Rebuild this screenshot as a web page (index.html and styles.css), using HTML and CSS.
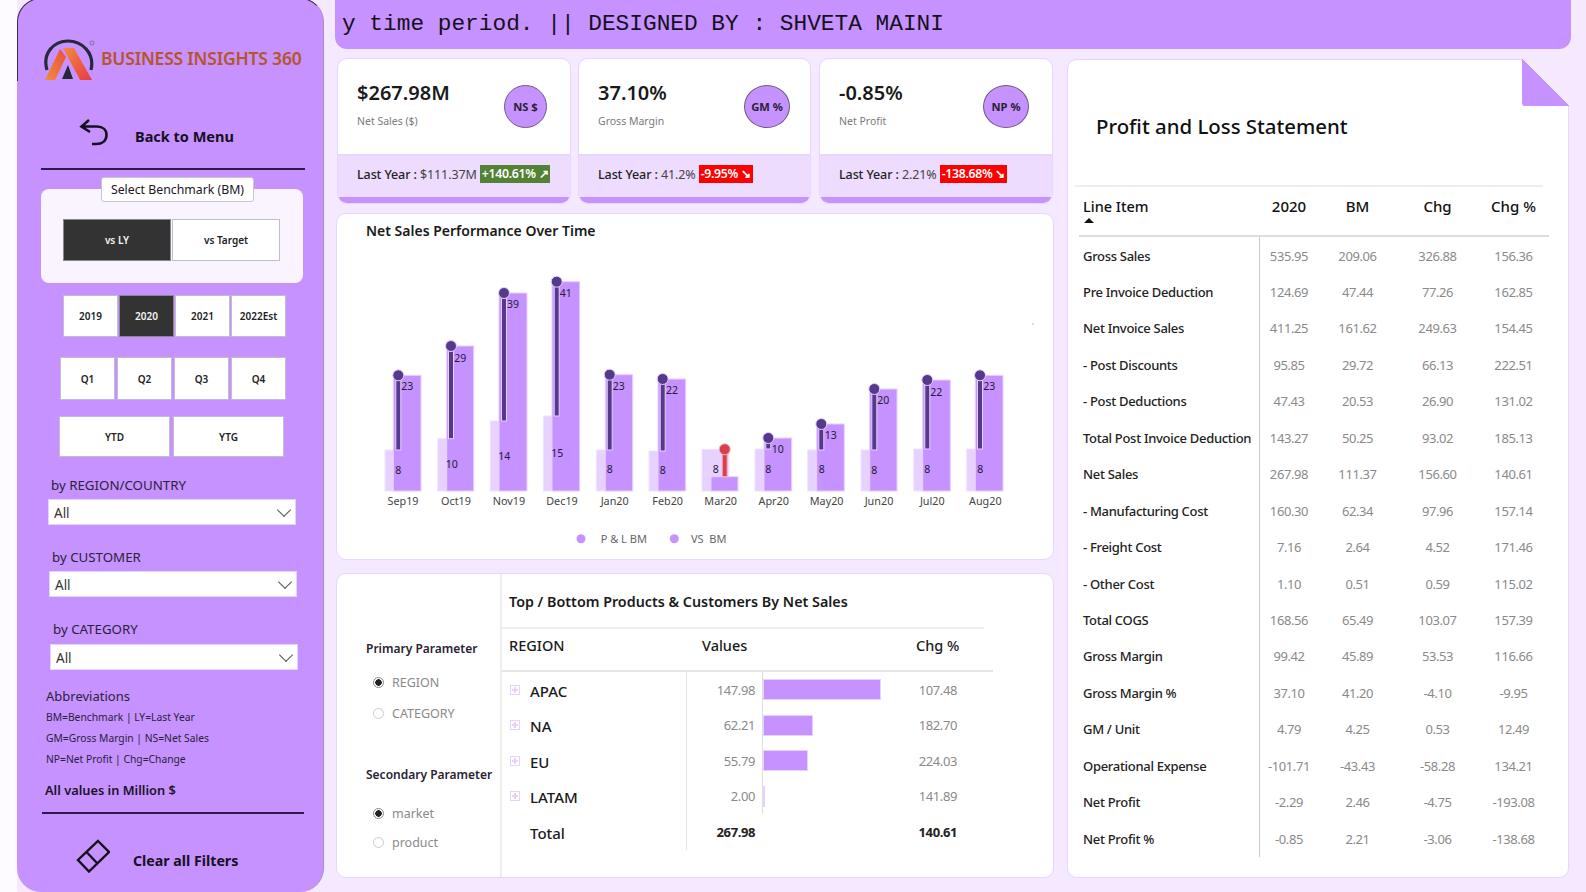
FILE: index.html
```html
<!DOCTYPE html>
<html lang="en">
<head>
  <meta charset="UTF-8" />
  <title>Business Insights 360 - Finance View</title>
  <link rel="stylesheet" href="styles.css">
</head>
<body>
<div class="page">

  <!-- left filter pane -->
  <aside class="sidebar">
    <div class="brand">
      <svg class="logo" width="52" height="44" viewBox="43 37 52 44">
        <defs>
          <linearGradient id="legLeft" x1="0" y1="1" x2="1" y2="0">
            <stop offset="0" stop-color="#f58a3c"/><stop offset="1" stop-color="#e8503a"/>
          </linearGradient>
          <linearGradient id="legRight" x1="0" y1="0" x2="1" y2="1">
            <stop offset="0" stop-color="#f58a3c"/><stop offset="1" stop-color="#e63a46"/>
          </linearGradient>
        </defs>
        <path d="M47 69 C42 52 54 40 68 40 C82 40 95 52 91 69" fill="none" stroke="#28283a" stroke-width="3.200"/>
        <polygon points="45,79 60,48 66,56 55,79" fill="url(#legLeft)"/>
        <polygon points="63,47 74,47 92,79 80,79" fill="url(#legRight)"/>
        <polygon points="62,78 68,64 73,78" fill="#28283a"/>
        <circle cx="92" cy="42" r="2" fill="none" stroke="#666" stroke-width=".7"/>
      </svg>
      <span class="brand-name">BUSINESS INSIGHTS 360</span>
    </div>

    <div class="side-action back">
      <svg width="30" height="28" viewBox="79 117 30 28" fill="none" stroke="#15101e" stroke-width="2.600">
        <path d="M89 119 L81.500 125.500 L90 131 M81.500 125.500 H97 C103 125.500 106.500 129 106.500 134 C106.500 140 102 143 96 143 H92"/>
      </svg>
      <span>Back to Menu</span>
    </div>

    <div class="side-rule"></div>

    <div class="bench">
      <div class="bench-title">Select Benchmark (BM)</div>
      <div class="btn-row">
        <div class="slicer on w108">vs LY</div>
        <div class="slicer w108">vs Target</div>
      </div>
    </div>

    <div class="btn-row years">
      <div class="slicer">2019</div>
      <div class="slicer on">2020</div>
      <div class="slicer">2021</div>
      <div class="slicer">2022Est</div>
    </div>
    <div class="btn-row quarters">
      <div class="slicer">Q1</div>
      <div class="slicer">Q2</div>
      <div class="slicer">Q3</div>
      <div class="slicer">Q4</div>
    </div>
    <div class="btn-row ytd">
      <div class="slicer">YTD</div>
      <div class="slicer">YTG</div>
    </div>

    <div class="filter f-region">
      <div class="filter-label">by REGION/COUNTRY</div>
      <div class="dropdown"><span>All</span><i class="chev"></i></div>
    </div>
    <div class="filter f-customer">
      <div class="filter-label">by CUSTOMER</div>
      <div class="dropdown"><span>All</span><i class="chev"></i></div>
    </div>
    <div class="filter f-category">
      <div class="filter-label">by CATEGORY</div>
      <div class="dropdown"><span>All</span><i class="chev"></i></div>
    </div>

    <div class="abbr">
      <div class="abbr-head">Abbreviations</div>
      <div>BM=Benchmark | LY=Last Year</div>
      <div>GM=Gross Margin | NS=Net Sales</div>
      <div>NP=Net Profit | Chg=Change</div>
    </div>
    <div class="all-values">All values in Million $</div>
    <div class="side-rule low"></div>

    <div class="side-action clear">
      <svg width="34" height="34" viewBox="76 839 34 34" fill="none" stroke="#15101e" stroke-width="2.400">
        <path d="M98 841 L109 852 L89 871.500 L78 860 Z M86.500 852 L97.500 863.500"/>
      </svg>
      <span>Clear all Filters</span>
    </div>
  </aside>

  <main class="main">
    <div class="ticker">y time period. || DESIGNED BY : SHVETA MAINI</div>

    <div class="content">
      <div class="left-col">

        <div class="kpis">
          <div class="kpi w234 kpi-ns">
            <div class="kpi-top">
              <div>
                <div class="kpi-value">$267.98M</div>
                <div class="kpi-label">Net Sales ($)</div>
              </div>
              <div class="kpi-circle">NS $</div>
            </div>
            <div class="kpi-foot">
              <span><em>Last Year :</em> $111.37M</span><span class="delta up">+140.61% &#8599;</span>
            </div>
          </div>
          <div class="kpi w233 kpi-gm">
            <div class="kpi-top">
              <div>
                <div class="kpi-value">37.10%</div>
                <div class="kpi-label">Gross Margin</div>
              </div>
              <div class="kpi-circle">GM %</div>
            </div>
            <div class="kpi-foot">
              <span><em>Last Year :</em> 41.2%</span><span class="delta down">-9.95% &#8600;</span>
            </div>
          </div>
          <div class="kpi w234 kpi-np">
            <div class="kpi-top">
              <div>
                <div class="kpi-value">-0.85%</div>
                <div class="kpi-label">Net Profit</div>
              </div>
              <div class="kpi-circle">NP %</div>
            </div>
            <div class="kpi-foot">
              <span><em>Last Year :</em> 2.21%</span><span class="delta down">-138.68% &#8600;</span>
            </div>
          </div>
        </div>

        <section class="panel chart-card">
          <h3 class="chart-title">Net Sales Performance Over Time</h3>
          <svg class="chart" width="715" height="316" viewBox="337 243 715 316">
            <!-- benchmark bars -->
            <g class="bar-bm">
              <rect x="385" y="450" width="27" height="41"/>
              <rect x="437.700" y="438.700" width="27" height="52.300"/>
              <rect x="490.300" y="421" width="27" height="70"/>
              <rect x="543.300" y="416" width="27" height="75"/>
              <rect x="596.300" y="450" width="27" height="41"/>
              <rect x="649" y="451" width="27" height="40"/>
              <rect x="702" y="449.300" width="27" height="41.700"/>
              <rect x="755" y="449" width="27" height="42"/>
              <rect x="807.700" y="450" width="27" height="41"/>
              <rect x="861" y="450" width="27" height="41"/>
              <rect x="913.700" y="449" width="27" height="42"/>
              <rect x="966.700" y="449" width="27" height="42"/>
            </g>
            <!-- actuals -->
            <g class="bar-vs">
              <rect x="393.300" y="375.300" width="27.700" height="115.700"/>
              <rect x="446.700" y="346" width="27" height="145"/>
              <rect x="499" y="293" width="28" height="198"/>
              <rect x="552" y="281.700" width="27.700" height="209.300"/>
              <rect x="605.300" y="374.700" width="27.400" height="116.300"/>
              <rect x="658" y="379" width="27.700" height="112"/>
              <rect x="711" y="476.700" width="27" height="14.300"/>
              <rect x="764" y="438" width="27.700" height="53"/>
              <rect x="816.700" y="424" width="27.600" height="67"/>
              <rect x="869.700" y="389" width="27.300" height="102"/>
              <rect x="922.700" y="380" width="27.600" height="111"/>
              <rect x="975.300" y="375.300" width="27.700" height="115.700"/>
            </g>
            <!-- variance stems -->
            <g class="stem">
              <rect x="395.800" y="378" width="5" height="72"/>
              <rect x="448.500" y="349" width="5" height="89.700"/>
              <rect x="501.500" y="296" width="5" height="125"/>
              <rect x="554.200" y="284" width="5" height="132"/>
              <rect x="607.200" y="378" width="5" height="72"/>
              <rect x="660.200" y="382" width="5" height="69"/>
              <rect x="765.800" y="441" width="5" height="8"/>
              <rect x="818.800" y="427" width="5" height="23"/>
              <rect x="871.800" y="392" width="5" height="58"/>
              <rect x="924.800" y="383" width="5" height="66"/>
              <rect x="977.500" y="378" width="5" height="71"/>
            </g>
            <rect class="stem-neg" x="722.200" y="452" width="5" height="24.700"/>
            <g class="dot">
              <circle cx="398.300" cy="375.300" r="5.500"/>
              <circle cx="451" cy="346" r="5.500"/>
              <circle cx="504" cy="293" r="5.500"/>
              <circle cx="556.700" cy="281.700" r="5.500"/>
              <circle cx="609.700" cy="374.700" r="5.500"/>
              <circle cx="662.700" cy="379" r="5.500"/>
              <circle cx="768.300" cy="438" r="5.500"/>
              <circle cx="821.300" cy="424" r="5.500"/>
              <circle cx="874.300" cy="389" r="5.500"/>
              <circle cx="927.300" cy="380" r="5.500"/>
              <circle cx="980" cy="375.300" r="5.500"/>
            </g>
            <circle class="dot-neg" cx="724.700" cy="449.300" r="5.500"/>
            <!-- data labels -->
            <g class="lbl">
              <text x="407.300" y="390">23</text><text x="398.300" y="474">8</text>
              <text x="460.300" y="362">29</text><text x="451.700" y="468">10</text>
              <text x="513" y="308">39</text><text x="504.300" y="460">14</text>
              <text x="565.700" y="297">41</text><text x="557.300" y="457">15</text>
              <text x="618.700" y="390">23</text><text x="609.700" y="473">8</text>
              <text x="672" y="394">22</text><text x="662.700" y="474">8</text>
              <text x="715.700" y="473">8</text>
              <text x="777.700" y="453">10</text><text x="768.300" y="473">8</text>
              <text x="830.700" y="439">13</text><text x="821.700" y="473">8</text>
              <text x="883.300" y="404">20</text><text x="874.300" y="474">8</text>
              <text x="936.300" y="396">22</text><text x="927.300" y="473">8</text>
              <text x="989.300" y="390">23</text><text x="980.300" y="473">8</text>
            </g>
            <g class="axis">
              <text x="403" y="505">Sep19</text>
              <text x="456" y="505">Oct19</text>
              <text x="509" y="505">Nov19</text>
              <text x="562" y="505">Dec19</text>
              <text x="614.700" y="505">Jan20</text>
              <text x="667.700" y="505">Feb20</text>
              <text x="720.700" y="505">Mar20</text>
              <text x="773.700" y="505">Apr20</text>
              <text x="826.700" y="505">May20</text>
              <text x="879" y="505">Jun20</text>
              <text x="932.300" y="505">Jul20</text>
              <text x="985.300" y="505">Aug20</text>
            </g>
            <circle class="legend-dot" cx="581" cy="538.700" r="4.500"/>
            <text class="legend" x="600.700" y="543">P &amp; L BM</text>
            <circle class="legend-dot" cx="674.300" cy="538.700" r="4.500"/>
            <text class="legend" x="691" y="543" xml:space="preserve">VS  BM</text>
            <circle cx="1033" cy="324" r=".7" fill="#999"/>
          </svg>
        </section>

        <section class="panel top-card">
          <div class="params">
            <div class="param-title">Primary Parameter</div>
            <div class="radio-row first"><i class="radio on"></i>REGION</div>
            <div class="radio-row"><i class="radio"></i>CATEGORY</div>
            <div class="param-title second">Secondary Parameter</div>
            <div class="radio-row first-b"><i class="radio on"></i>market</div>
            <div class="radio-row tight"><i class="radio"></i>product</div>
          </div>
          <div class="top-table">
            <h3 class="top-title">Top / Bottom Products &amp; Customers By Net Sales</h3>
            <div class="top-head">
              <span class="col-name">REGION</span>
              <span class="col-values">Values</span>
              <span class="col-chg">Chg %</span>
            </div>
            <div class="top-row">
              <span class="col-name"><i class="expand"></i>APAC</span>
              <span class="col-num">147.98</span>
              <span class="col-bar"><b style="width:118px"></b></span>
              <span class="col-pct">107.48</span>
            </div>
            <div class="top-row">
              <span class="col-name"><i class="expand"></i>NA</span>
              <span class="col-num">62.21</span>
              <span class="col-bar"><b style="width:50px"></b></span>
              <span class="col-pct">182.70</span>
            </div>
            <div class="top-row">
              <span class="col-name"><i class="expand"></i>EU</span>
              <span class="col-num">55.79</span>
              <span class="col-bar"><b style="width:45px"></b></span>
              <span class="col-pct">224.03</span>
            </div>
            <div class="top-row">
              <span class="col-name"><i class="expand"></i>LATAM</span>
              <span class="col-num">2.00</span>
              <span class="col-bar"><b style="width:2px"></b></span>
              <span class="col-pct">141.89</span>
            </div>
            <div class="top-row total">
              <span class="col-name"><i class="expand blank"></i>Total</span>
              <span class="col-num">267.98</span>
              <span class="col-bar none"></span>
              <span class="col-pct">140.61</span>
            </div>
          </div>
        </section>
      </div>

      <section class="panel pl-card">
        <div class="fold"></div>
        <h2 class="pl-title">Profit and Loss Statement</h2>
        <div class="pl-head">
          <div class="pl-h-name">Line Item<i class="sort-up"></i></div>
          <div>2020</div><div>BM</div><div>Chg</div><div>Chg %</div>
        </div>
        <div class="pl-body">
          <div class="nm">Gross Sales</div><div>535.95</div><div>209.06</div><div>326.88</div><div>156.36</div>
          <div class="nm">Pre Invoice Deduction</div><div>124.69</div><div>47.44</div><div>77.26</div><div>162.85</div>
          <div class="nm">Net Invoice Sales</div><div>411.25</div><div>161.62</div><div>249.63</div><div>154.45</div>
          <div class="nm">- Post Discounts</div><div>95.85</div><div>29.72</div><div>66.13</div><div>222.51</div>
          <div class="nm">- Post Deductions</div><div>47.43</div><div>20.53</div><div>26.90</div><div>131.02</div>
          <div class="nm">Total Post Invoice Deduction</div><div>143.27</div><div>50.25</div><div>93.02</div><div>185.13</div>
          <div class="nm">Net Sales</div><div>267.98</div><div>111.37</div><div>156.60</div><div>140.61</div>
          <div class="nm">- Manufacturing Cost</div><div>160.30</div><div>62.34</div><div>97.96</div><div>157.14</div>
          <div class="nm">- Freight Cost</div><div>7.16</div><div>2.64</div><div>4.52</div><div>171.46</div>
          <div class="nm">- Other Cost</div><div>1.10</div><div>0.51</div><div>0.59</div><div>115.02</div>
          <div class="nm">Total COGS</div><div>168.56</div><div>65.49</div><div>103.07</div><div>157.39</div>
          <div class="nm">Gross Margin</div><div>99.42</div><div>45.89</div><div>53.53</div><div>116.66</div>
          <div class="nm">Gross Margin %</div><div>37.10</div><div>41.20</div><div>-4.10</div><div>-9.95</div>
          <div class="nm">GM / Unit</div><div>4.79</div><div>4.25</div><div>0.53</div><div>12.49</div>
          <div class="nm">Operational Expense</div><div>-101.71</div><div>-43.43</div><div>-58.28</div><div>134.21</div>
          <div class="nm">Net Profit</div><div>-2.29</div><div>2.46</div><div>-4.75</div><div>-193.08</div>
          <div class="nm">Net Profit %</div><div>-0.85</div><div>2.21</div><div>-3.06</div><div>-138.68</div>
        </div>
      </section>
    </div>
  </main>
</div>
</body>
</html>
```

FILE: styles.css
```css
* {
  box-sizing: border-box;
}
html, body {
  margin: 0;
  height: 100%;
  overflow: hidden;
}
body {
  font-family: "Noto Sans", "Open Sans", sans-serif;
  color: #1c1626;
  background: #fdfbff;
}
h2, h3 {
  margin: 0;
}
.page {
  display: flex;
  width: 1586px;
  height: 892px;
  padding-left: 17px;
  background: linear-gradient(90deg, #fdfbff 17px, #f4e9ff 17px);
}

/* Sidebar */
.sidebar {
  position: relative;
  width: 307px;
  height: 894px;
  margin-top: -2px;
  padding-top: 40px;
  flex: none;
  background: #c592ff;
  border-radius: 24px;
  border-right: 1px solid #a98ccc;
}
/* the dark rim only runs round the top of the pane */
.sidebar::before {
  content: "";
  position: absolute;
  top: 0;
  left: 0;
  right: -1px;
  height: 82px;
  border: 1px solid #3a2c4d;
  border-bottom: 0;
  border-right-color: transparent;
  border-radius: 24px 24px 0 0;
}
.brand {
  display: flex;
  align-items: center;
  gap: 6px;
  margin-left: 26px;
  height: 43px;
}
.brand-name {
  font-size: 17.500px;
  font-weight: 600;
  color: #b5552a;
  white-space: nowrap;
  letter-spacing: -.2px;
  margin-top: -3px;
}
.side-action {
  display: flex;
  align-items: center;
  font-size: 14.500px;
  font-weight: 700;
  color: #15101e;
}
.back {
  margin: 37px 0 0 62px;
  height: 28px;
  gap: 26px;
}
.back span {
  margin-top: 8px;
}
.clear {
  margin: 25px 0 0 59px;
  height: 34px;
  gap: 23px;
  font-size: 14.200px;
}
.clear span {
  margin-top: 9px;
}
.side-rule {
  width: 264px;
  height: 2px;
  margin: 22px 0 0 24px;
  background: #2d1a4a;
}
.side-rule.low {
  width: 262px;
  margin-top: 12px;
  margin-left: 25px;
}
.bench {
  position: relative;
  width: 262px;
  height: 94px;
  margin: 19px 0 0 24px;
  padding: 30px 0 0 22px;
  background: #f9f4ff;
  border-radius: 8px;
}
.bench-title {
  position: absolute;
  top: -12px;
  left: 60px;
  width: 153px;
  height: 25px;
  line-height: 24px;
  text-align: center;
  font-size: 12.300px;
  background: #fff;
  border: 1px solid #c9c4cf;
  border-radius: 3px;
}
.btn-row {
  display: flex;
  gap: 1px;
}
.slicer {
  display: flex;
  align-items: center;
  justify-content: center;
  width: 55px;
  font-size: 10px;
  font-weight: 600;
  color: #222;
  background: #fff;
  border: 1px solid #c4bccd;
}
.slicer.on {
  background: #333;
  color: #f4f4f4;
  border-color: #888;
}
.w108 {
  width: 108px;
  height: 42px;
}
.years {
  margin: 12px 0 0 46px;
  height: 42px;
}
.quarters {
  margin: 20px 0 0 43px;
  height: 43px;
  gap: 2px;
}
.ytd {
  margin: 16px 0 0 42px;
  height: 41px;
  gap: 3px;
}
.ytd .slicer {
  width: 111px;
}
.filter-label {
  height: 20px;
  line-height: 20px;
  font-size: 13.300px;
  color: #2c2238;
}
.dropdown {
  display: flex;
  align-items: center;
  justify-content: space-between;
  width: 248px;
  height: 26px;
  margin-top: 4px;
  margin-left: -3px;
  padding: 2px 2px 0 5px;
  font-size: 13.500px;
  color: #333;
  background: #fff;
  border: 1px solid #e4d2ff;
}
.chev {
  width: 10px;
  height: 10px;
  margin: -6px 4px 0 0;
  border-right: 1px solid #555;
  border-bottom: 1px solid #555;
  transform: rotate(45deg);
}
.f-region {
  margin: 18px 0 0 34px;
}
.f-customer {
  margin: 22px 0 0 35px;
}
.f-category {
  margin: 22px 0 0 36px;
}
.f-category .dropdown {
  margin-top: 5px;
}
.abbr {
  margin: 16px 0 0 29px;
  font-size: 10.300px;
  line-height: 21px;
  color: #2c2238;
}
.abbr-head {
  font-size: 13px;
  line-height: 21px;
}
.all-values {
  margin: 10px 0 0 28px;
  font-size: 12.800px;
  line-height: 20px;
  font-weight: 600;
  color: #1c1228;
}

/* Main area */
.main {
  width: 1236px;
  margin-left: 11px;
}
.ticker {
  height: 49px;
  padding: 9px 0 0 7px;
  line-height: 31px;
  font-family: "Liberation Mono", monospace;
  font-size: 22.800px;
  color: #16101e;
  white-space: nowrap;
  background: #c592ff;
  border-radius: 0 0 12px 12px;
}
.content {
  display: flex;
  gap: 13px;
  margin-top: 9px;
}
.left-col {
  width: 718px;
  flex: none;
  margin-left: 1px;
}
.panel {
  background: #fff;
  border: 1px solid #e7d6ff;
  border-radius: 10px;
}

/* KPI cards */
.kpis {
  display: flex;
  gap: 7px;
  margin-left: 1px;
  height: 146px;
}
.kpi {
  display: flex;
  flex-direction: column;
  overflow: hidden;
  background: #fff;
  border: 1px solid #e7d6ff;
  border-radius: 10px;
}
.w234 {
  width: 234px;
}
.w233 {
  width: 233px;
}
.kpi-np {
  margin-left: 1px;
}
.kpi-top {
  display: flex;
  justify-content: space-between;
  align-items: center;
  height: 95px;
  padding: 0 23px 6px 19px;
}
.kpi-gm .kpi-top {
  padding-right: 20px;
}
.kpi-value {
  font-size: 20px;
  font-weight: 600;
  line-height: 28px;
  color: #1a1a1a;
}
.kpi-label {
  margin-top: 6px;
  font-size: 10.500px;
  line-height: 16px;
  color: #7b7b7b;
}
.kpi-circle {
  display: flex;
  align-items: center;
  justify-content: center;
  width: 43px;
  height: 43px;
  margin-top: 6px;
  font-size: 11.200px;
  font-weight: 700;
  color: #2a2233;
  background: #c592ff;
  border: 1px solid #6d5a80;
  border-radius: 50%;
}
.kpi-gm .kpi-circle,
.kpi-np .kpi-circle {
  width: 46px;
}
.kpi-foot {
  display: flex;
  align-items: center;
  gap: 3px;
  flex: 1;
  padding: 0 0 5px 19px;
  font-size: 12.500px;
  letter-spacing: -.1px;
  color: #444;
  background: #eedcff;
  border-top: 2px solid #e7d6ff;
  border-bottom: 6px solid #c592ff;
}
.kpi-foot em {
  font-style: normal;
  font-weight: 500;
  color: #222;
}
.delta {
  padding: 0 2px;
  line-height: 18px;
  font-size: 12.300px;
  letter-spacing: -.3px;
  font-weight: 600;
  color: #fff;
}
.delta.up {
  background: #548235;
}
.delta.down {
  background: #f00;
}

/* Chart card */
.chart-card {
  height: 347px;
  margin-top: 9px;
}
.chart-title {
  padding: 7px 0 0 29px;
  height: 29px;
  line-height: 20px;
  font-size: 14px;
  font-weight: 600;
  color: #1a1a1a;
}
.chart {
  display: block;
}
.bar-bm rect {
  fill: #e6d1ff;
  stroke: #f0e4ff;
  stroke-width: 1;
}
.bar-vs rect {
  fill: #c592ff;
  stroke: #e6d1ff;
  stroke-width: 1;
}
.stem rect {
  fill: #553a8c;
  stroke: #e6d1ff;
  stroke-width: 1;
}
.stem-neg {
  fill: #d9404e;
  stroke: #f0b6c0;
  stroke-width: 1;
}
.dot circle {
  fill: #553a8c;
  stroke: #e6d1ff;
  stroke-width: 1;
}
.dot-neg {
  fill: #d9404e;
  stroke: #f0b6c0;
  stroke-width: 1;
}
.lbl text {
  font-size: 10.500px;
  text-anchor: middle;
  fill: #241a33;
}
.axis text {
  font-size: 10.800px;
  text-anchor: middle;
  fill: #444;
}
.legend-dot {
  fill: #c592ff;
}
.legend {
  font-size: 11px;
  fill: #666;
}

/* Top / bottom card */
.top-card {
  display: flex;
  height: 305px;
  margin-top: 13px;
}
.params {
  width: 165px;
  flex: none;
  padding: 64px 0 0 29px;
  border-right: 2px solid #eee;
}
.param-title {
  height: 22px;
  line-height: 22px;
  font-size: 12px;
  font-weight: 600;
  color: #2a2233;
  white-space: nowrap;
}
.param-title.second {
  margin-top: 36px;
}
.radio-row {
  display: flex;
  align-items: center;
  gap: 8px;
  height: 30px;
  margin: 1px 0 0 7px;
  font-size: 12.500px;
  color: #8a8a8a;
}
.radio-row.first {
  margin-top: 7px;
}
.radio-row.first-b {
  margin-top: 12px;
}
.radio-row.tight {
  margin-top: -1px;
}
.radio {
  width: 11px;
  height: 11px;
  background: #fff;
  border: 1px solid #ccc;
  border-radius: 50%;
}
.radio.on {
  background: radial-gradient(circle, #222 0 3px, #fff 3.500px);
  border-color: #888;
}
.top-table {
  flex: 1;
}
.top-title {
  width: 482px;
  height: 55px;
  padding: 18px 0 0 7px;
  line-height: 20px;
  font-size: 14.300px;
  font-weight: 600;
  color: #1a1a1a;
  border-bottom: 2px solid #eee;
}
.top-head {
  display: flex;
  width: 491px;
  height: 43px;
  padding: 5px 0 0 7px;
  line-height: 22px;
  font-size: 14.500px;
  font-weight: 500;
  color: #1a1a1a;
  border-bottom: 2px solid #e6e6e6;
}
.top-head .col-name {
  display: block;
  width: 193px;
}
.top-head .col-values {
  width: 214px;
}
.top-row {
  display: flex;
  align-items: center;
  height: 35.500px;
  color: #8a8a8a;
  font-size: 13px;
  letter-spacing: -.4px;
}
.col-name {
  display: flex;
  align-items: center;
}
.top-row .col-name {
  width: 185px;
  height: 100%;
  padding: 2px 0 0 8px;
  font-size: 15px;
  font-weight: 500;
  letter-spacing: 0;
  color: #1a1a1a;
  border-right: 1px solid #e6e6e6;
}
.expand {
  position: relative;
  width: 10px;
  height: 10px;
  margin: -2px 10px 0 0;
  border: 1px solid #e6d1ff;
}
.expand::after,
.expand::before {
  content: "";
  position: absolute;
  background: #e6d1ff;
}
.expand::after {
  left: 1px;
  top: 3px;
  width: 6px;
  height: 2px;
}
.expand::before {
  left: 3px;
  top: 1px;
  width: 2px;
  height: 6px;
}
.expand.blank {
  border: 0;
}
.expand.blank::after,
.expand.blank::before {
  display: none;
}
.col-num {
  width: 68px;
  text-align: right;
}
.col-bar {
  display: flex;
  align-items: center;
  width: 142px;
  height: 100%;
  margin-left: 7px;
  border-left: 1px solid #ddd;
}
.col-bar.none {
  border-left: 0;
}
.col-bar b {
  height: 21px;
  background: #c592ff;
  border: 1px solid #e6d1ff;
}
.col-pct {
  width: 53px;
  text-align: right;
}
.total {
  font-weight: 700;
  color: #222;
}

/* P&L */
.pl-card {
  position: relative;
  width: 502px;
  height: 819px;
  margin-top: 1px;
}
.fold {
  position: absolute;
  top: -2px;
  right: -2px;
  width: 48px;
  height: 48px;
  background: linear-gradient(to top right, #c592ff 50%, #f4e9ff 50%);
  border-bottom-left-radius: 3px;
}
.pl-title {
  height: 125px;
  padding: 51px 0 0 28px;
  line-height: 30px;
  font-size: 20.400px;
  font-weight: 500;
  color: #111;
}
.pl-head,
.pl-body {
  display: grid;
  grid-template-columns: 181px 58px 79px 81px 71px;
  width: 470px;
  margin-left: 11px;
}
.pl-head {
  position: relative;
  height: 52px;
  padding-top: 10px;
  line-height: 22px;
  font-size: 15px;
  font-weight: 500;
  color: #111;
  text-align: center;
  border-bottom: 2px solid #ddd;
}
.pl-head::before {
  content: "";
  position: absolute;
  top: 0;
  left: -4px;
  width: 468px;
  height: 2px;
  background: #eee;
}
.pl-h-name {
  padding-left: 4px;
  font-size: 14.500px;
  text-align: left;
}
.sort-up {
  display: block;
  width: 0;
  height: 0;
  margin: 1px 0 0 1px;
  border-left: 5px solid transparent;
  border-right: 5px solid transparent;
  border-bottom: 5px solid #111;
}
.pl-body {
  grid-auto-rows: 36.460px;
  font-size: 13px;
  letter-spacing: -.4px;
  color: #8a8a8a;
  text-align: center;
}
.pl-body div {
  padding-top: .5px;
  line-height: 36px;
}
.pl-body .nm {
  padding-left: 4px;
  font-size: 13px;
  font-weight: 500;
  letter-spacing: -.3px;
  color: #222;
  text-align: left;
  white-space: nowrap;
  border-right: 1px solid #c9c9c9;
}
```
